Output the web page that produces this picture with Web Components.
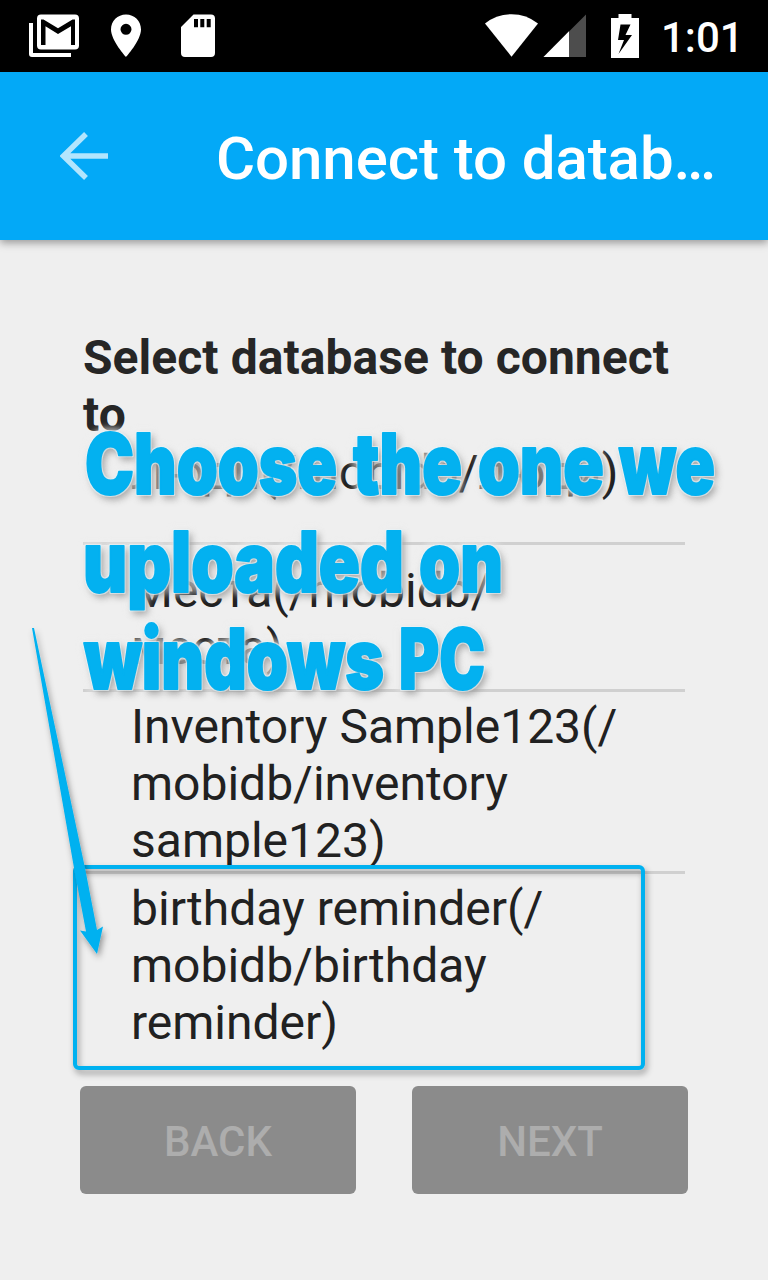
<!DOCTYPE html>
<html lang="en">
<head>
<meta charset="utf-8">
<title>Connect to database</title>
<style>
html,body{margin:0;padding:0;background:#efefef}
body{font-family:Roboto,sans-serif;color:#212121}
</style>
</head>
<body>
<db-screen></db-screen>
<script>
const define = (name, html) => customElements.define(name, class extends HTMLElement {
  constructor() {
    super();
    const t = document.createElement('template');
    t.innerHTML = html;
    this.attachShadow({mode: 'open'}).appendChild(t.content.cloneNode(true));
  }
});

define('status-bar', `
<style>
:host{display:flex;height:72px;background:#000;color:#fff;box-sizing:border-box}
svg{flex:none;display:block}
time{flex:none;width:107px;font:500 42px/49px Roboto,sans-serif;padding-top:13px;white-space:nowrap}
.gap{flex:1}
</style>
<svg width="230" height="72" viewBox="0 0 230 72" fill="#fff">
  <path d="M29 23h4v30h38v4H32q-3 0-3-3z"/>
  <path fill-rule="evenodd" d="M41 14.500h34q4 0 4 4v27q0 4-4 4H41q-4 0-4-4v-27q0-4 4-4zM41 45h4.500V26.300L58 34l13-7.700V45h4V19.500h-2.500L58 28.300 43.500 19.500H41z"/>
  <path fill-rule="evenodd" d="M126 14.500c-8.500 0-15 6.500-15 15C111 40.500 126 57 126 57s15-16.500 15-27.500c0-8.500-6.500-15-15-15zm0 9.300a5.500 5.500 0 1 1 0 11 5.500 5.500 0 0 1 0-11z"/>
  <path fill-rule="evenodd" d="M193.500 14.500H211q4 0 4 4V53q0 4-4 4h-26q-4 0-4-4V27zM194 19v8.300h4V19zm6.300 0v8.300h4V19zm6.400 0v8.300h4V19z"/>
</svg>
<span class="gap"></span>
<svg width="181" height="72" viewBox="480 0 181 72" fill="#fff">
  <path d="M485 23.500Q496.500 14.200 511.500 14.200T538 23.500L511.500 56.700z"/>
  <path d="M586 14.500V57h-42.500z" fill="#4d4d4d"/><path d="M569 31.300V57h-25.500z"/>
  <path fill-rule="evenodd" d="M618.500 14h13v4h7.500v40h-28V18h7.500zM620.500 24.500L618 40h6l-5.500 14L632 35h-6.500l5-10.500z"/>
</svg>
<time>1:01</time>`);

define('app-bar', `
<style>
:host{display:flex;align-items:center;height:168px;background:#03a9f7;color:#fff;box-shadow:0 3px 8px rgba(0,0,0,.36);position:relative;box-sizing:border-box;padding:0 50px 0 60px}
svg{flex:none;display:block}
h1{margin:6px 0 0 107px;font:500 60px/72px Roboto,sans-serif;letter-spacing:-.08px;white-space:nowrap}
</style>
<svg width="49" height="48" viewBox="0 0 49 48"><path d="M26 2L3.500 24 26 46M3.500 24H48" fill="none" stroke="#b3e5fd" stroke-width="5.500"/></svg>
<h1><slot></slot></h1>`);

define('db-item', `
<style>
:host{display:flex;align-items:center;box-sizing:border-box;min-height:147px;padding:6px 20px 2px 48px;border-bottom:3px solid #d0d0d0;font:400 48px/57px Roboto,sans-serif;color:#212121;white-space:nowrap}
:host([last]){border-color:transparent}
</style>
<span><slot></slot></span>`);

define('db-list', `
<style>
:host{display:block;height:625px;overflow:hidden}
div{margin-top:-45px;display:flex;flex-direction:column}
</style>
<div><slot></slot></div>`);

define('wizard-button', `
<style>
:host{display:block;flex:none}
button{display:block;width:276px;height:108px;border:0;border-radius:6px;background:#8b8b8b;color:#adadad;font:500 42px/108px Roboto,sans-serif;padding:2px 0 0;box-sizing:border-box}
</style>
<button disabled><slot></slot></button>`);

define('tutorial-note', `
<style>
:host{position:absolute;left:0;top:0;pointer-events:none}
svg{display:block}
text{font:900 84px Inter,"Liberation Sans",sans-serif;fill:#03b1f0;stroke:#03b1f0;stroke-width:2px;stroke-linejoin:round}
</style>
<svg width="768" height="1280" viewBox="0 0 768 1280">
  <defs>
    <filter id="glow" filterUnits="userSpaceOnUse" x="0" y="400" width="768" height="330" color-interpolation-filters="sRGB">
      <feMorphology in="SourceAlpha" operator="dilate" radius="3" result="d"/>
      <feGaussianBlur in="d" stdDeviation="3" result="b"/>
      <feFlood flood-color="#efefef" flood-opacity=".75"/><feComposite in2="b" operator="in" result="halo"/>
      <feGaussianBlur in="SourceAlpha" stdDeviation="3.500"/><feOffset dx="3" dy="4" result="s"/>
      <feFlood flood-color="#000" flood-opacity=".3"/><feComposite in2="s" operator="in" result="shade"/>
      <feMorphology in="SourceAlpha" operator="dilate" radius="1" result="e"/>
      <feFlood flood-color="#e8f5fa" flood-opacity=".6"/><feComposite in2="e" operator="in" result="edge"/>
      <feMerge><feMergeNode in="halo"/><feMergeNode in="shade"/><feMergeNode in="edge"/><feMergeNode in="SourceGraphic"/></feMerge>
    </filter>
    <filter id="drop" filterUnits="userSpaceOnUse" x="0" y="600" width="768" height="520">
      <feDropShadow dx="2" dy="4" stdDeviation="3" flood-color="#000" flood-opacity=".38"/>
    </filter>
  </defs>
  <g filter="url(#glow)">
    <text x="85" y="494" textLength="252" lengthAdjust="spacingAndGlyphs">Choose</text>
    <text x="353" y="494" textLength="109" lengthAdjust="spacingAndGlyphs">the</text>
    <text x="478" y="494" textLength="126" lengthAdjust="spacingAndGlyphs">one</text>
    <text x="619" y="494" textLength="96" lengthAdjust="spacingAndGlyphs">we</text>
    <text x="83" y="592" textLength="321" lengthAdjust="spacingAndGlyphs">uploaded</text>
    <text x="419" y="592" textLength="84" lengthAdjust="spacingAndGlyphs">on</text>
    <text x="84" y="689" textLength="300" lengthAdjust="spacingAndGlyphs">windows</text>
    <text x="399" y="689" textLength="86" lengthAdjust="spacingAndGlyphs">PC</text>
  </g>
  <rect x="75" y="867" width="568" height="201" rx="4" fill="none" stroke="#03b1f0" stroke-width="4" filter="url(#drop)"/>
  <path d="M32 628h2L85 868 97 930 103 926.500 97 954 80 930.500 86 931.500 74 868z" fill="#03b1f0" filter="url(#drop)"/>
</svg>`);

define('db-screen', `
<style>
:host{display:flex;flex-direction:column;position:relative;width:768px;height:1280px;background:#efefef;overflow:hidden}
main{display:flex;flex-direction:column;padding:89px 83px 0}
h2{margin:0;font:700 48px/57px Roboto,sans-serif;letter-spacing:.05px;color:#262626}
nav{display:flex;gap:56px;margin:18px -3px 0}
</style>
<status-bar></status-bar>
<app-bar>Connect to datab…</app-bar>
<main>
  <h2>Select database to connect to</h2>
  <db-list>
    <db-item>Люди(/mobidb/люди)</db-item>
    <db-item>Места(/mobidb/<br>места)</db-item>
    <db-item>Inventory Sample123(/<br>mobidb/inventory<br>sample123)</db-item>
    <db-item last>birthday reminder(/<br>mobidb/birthday<br>reminder)</db-item>
  </db-list>
  <nav><wizard-button>BACK</wizard-button><wizard-button>NEXT</wizard-button></nav>
</main>
<tutorial-note></tutorial-note>`);
</script>
</body>
</html>
